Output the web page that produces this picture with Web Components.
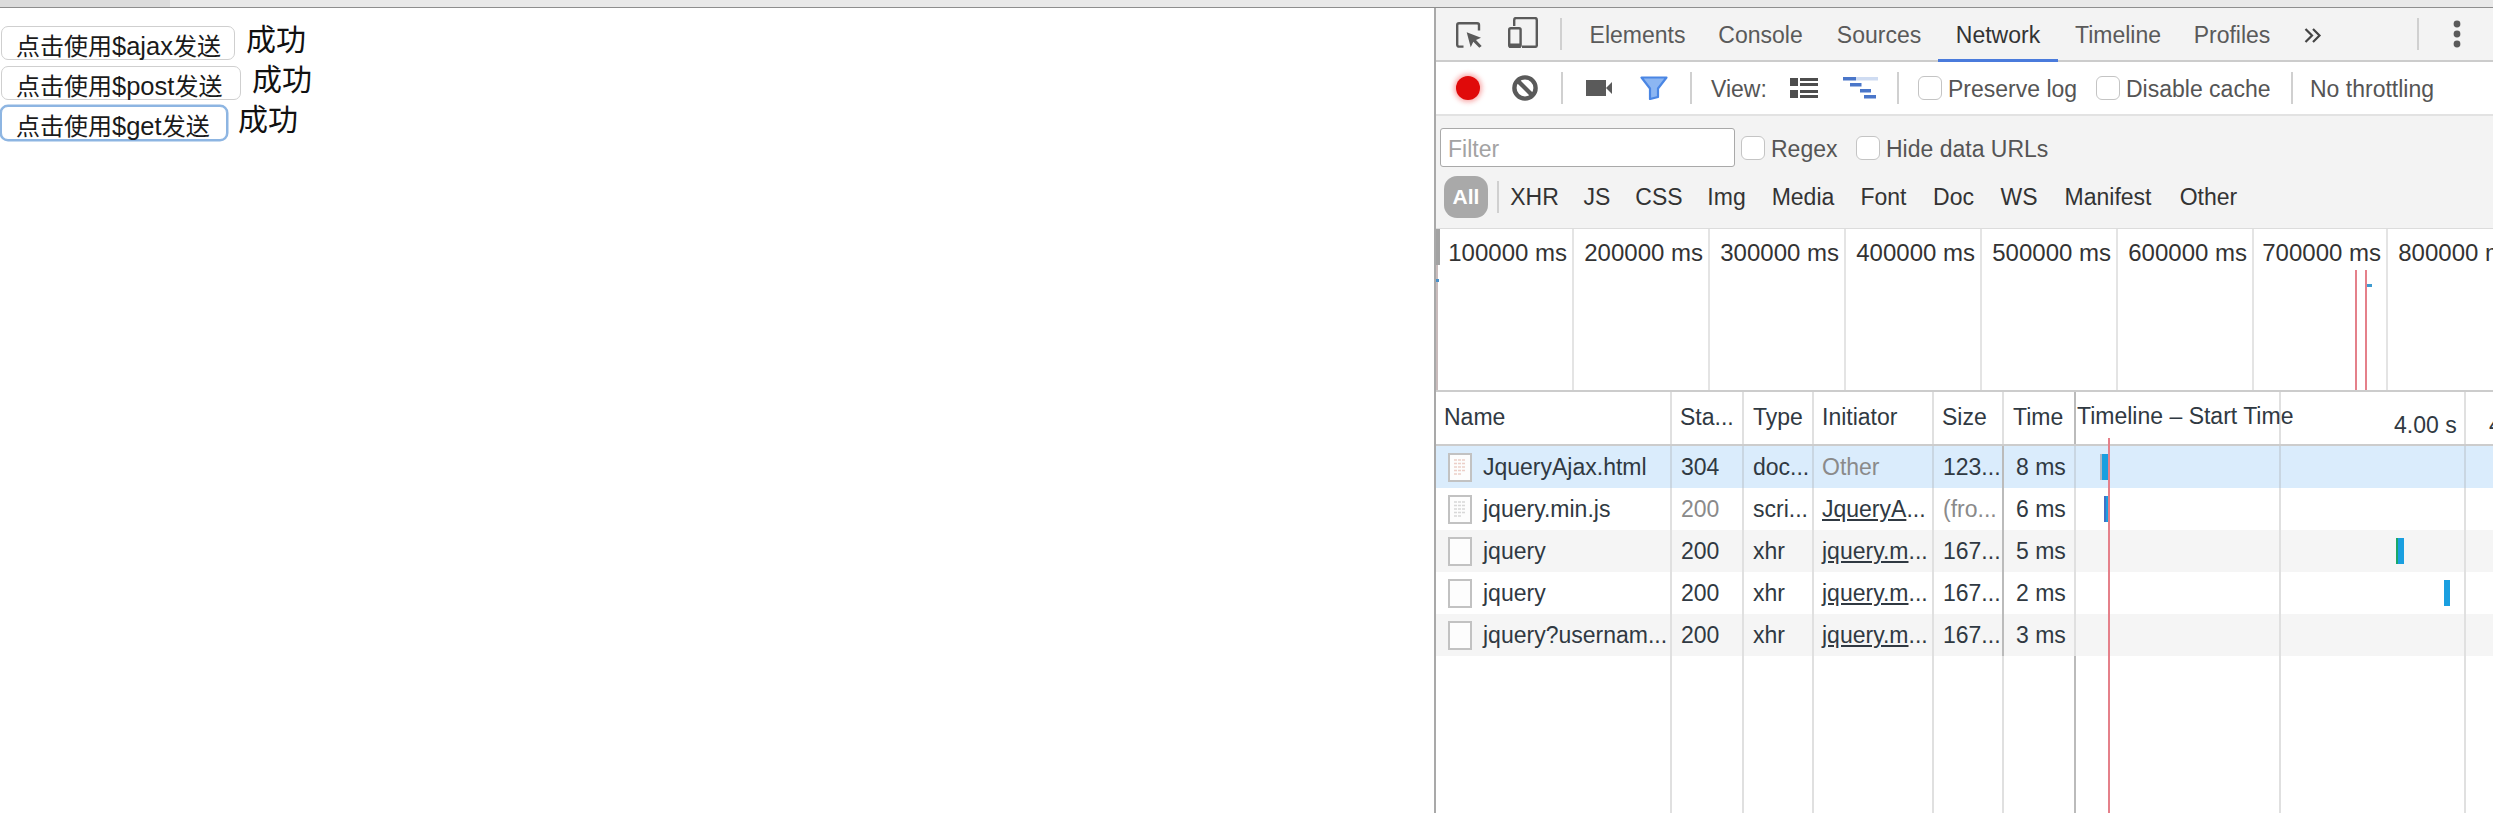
<!DOCTYPE html>
<html lang="zh">
<head>
<meta charset="utf-8">
<title>JqueryAjax</title>
<style>
    html, body { margin: 0; height: 100%; overflow: hidden; background: #fff; }
    body { display: flex; flex-direction: column; font-family: "Liberation Sans", "Noto Sans CJK SC", sans-serif; }
</style>
</head>
<body>
<window-strip></window-strip>
<app-split>
    <demo-pane slot="page">
        <demo-line style="--w:234px">点击使用<span class="l">$ajax</span>发送<span slot="result">成功</span></demo-line>
        <demo-line style="--w:240px">点击使用<span class="l">$post</span>发送<span slot="result">成功</span></demo-line>
        <demo-line focused style="--w:226px">点击使用<span class="l">$get</span>发送<span slot="result">成功</span></demo-line>
    </demo-pane>
    <dev-tools slot="tools">
        <dt-tabbar>
            <dt-tab style="--w:127px">Elements</dt-tab>
            <dt-tab style="--w:119px">Console</dt-tab>
            <dt-tab style="--w:118px">Sources</dt-tab>
            <dt-tab active style="--w:120px">Network</dt-tab>
            <dt-tab style="--w:120px">Timeline</dt-tab>
            <dt-tab style="--w:108px">Profiles</dt-tab>
        </dt-tabbar>
        <dt-toolbar></dt-toolbar>
        <dt-filterbar></dt-filterbar>
        <dt-overview></dt-overview>
        <dt-request-table>
            <dt-request-row selected icon="doc" name="JqueryAjax.html" status="304" type="doc..." initiator="Other" muted-initiator size="123..." time="8 ms" bar-left="24" bar-width="9" bar-lead="#a9b6c4"></dt-request-row>
            <dt-request-row icon="doc" name="jquery.min.js" status="200" muted-status type="scri..." initiator="JqueryA" link size="(fro..." muted-size time="6 ms" bar-left="28" bar-width="6" bar-lead="#3f72c8"></dt-request-row>
            <dt-request-row stripe name="jquery" status="200" type="xhr" initiator="jquery.m" link size="167..." time="5 ms" bar-left="320" bar-width="8" bar-lead="#1aa86a"></dt-request-row>
            <dt-request-row name="jquery" status="200" type="xhr" initiator="jquery.m" link size="167..." time="2 ms" bar-left="368" bar-width="6"></dt-request-row>
            <dt-request-row stripe name="jquery?usernam..." status="200" type="xhr" initiator="jquery.m" link size="167..." time="3 ms"></dt-request-row>
        </dt-request-table>
    </dev-tools>
</app-split>

<script>
// thin window edge over the screenshot
class WindowStrip extends HTMLElement {
    constructor() {
        super();
        this.attachShadow({ mode: 'open' }).innerHTML = `
            <style>
                :host {
                    display: block;
                    height: 7px;
                    flex: none;
                    background: linear-gradient(90deg, #dcdcdc 170px, #e9e9e9 170px);
                    border-bottom: 1px solid #8e8e8e;
                }
            </style>`;
    }
}

class AppSplit extends HTMLElement {
    constructor() {
        super();
        this.attachShadow({ mode: 'open' }).innerHTML = `
            <style>
                :host {
                    display: grid;
                    grid-template-columns: 1434px 1fr;
                    flex: 1;
                    min-height: 0;
                }
            </style>
            <slot name="page"></slot>
            <slot name="tools"></slot>`;
    }
}

class DemoPane extends HTMLElement {
    constructor() {
        super();
        this.attachShadow({ mode: 'open' }).innerHTML = `
            <style>
                :host {
                    display: block;
                    padding: 15px 0 0 1px;
                    background: #fff;
                }
            </style>
            <slot></slot>`;
    }
}

class DemoLine extends HTMLElement {
    constructor() {
        super();
        const ring = this.hasAttribute('focused');
        this.attachShadow({ mode: 'open' }).innerHTML = `
            <style>
                :host {
                    display: flex;
                    align-items: center;
                    gap: 11px;
                    height: 40px;
                    color: #111;
                }
                button {
                    width: var(--w);
                    height: 34px;
                    box-sizing: border-box;
                    margin: 0;
                    padding: 0 0 3px 14px;
                    background: #fff;
                    border: 1.5px solid ${ring ? '#8db5e2' : '#cfcfcf'};
                    border-radius: 7px;
                    font: 24px "Liberation Sans", "Noto Sans CJK SC", sans-serif;
                    color: #1a1a1a;
                    text-align: left;
                    white-space: nowrap;
                    ${ring ? 'box-shadow: 0 0 0 1.5px #8db5e2;' : ''}
                }
                ::slotted(.l) { font-size: 25.5px; }
                .result {
                    padding-bottom: 6px;
                    font-size: 30px;
                    line-height: 34px;
                }
            </style>
            <button><slot></slot></button>
            <span class="result"><slot name="result"></slot></span>`;
    }
}

class DevTools extends HTMLElement {
    constructor() {
        super();
        this.attachShadow({ mode: 'open' }).innerHTML = `
            <style>
                :host {
                    display: flex;
                    flex-direction: column;
                    min-width: 0;
                    min-height: 0;
                    overflow: hidden;
                    border-left: 2px solid #a9a9a9;
                    background: #fff;
                    font-size: 23px;
                    color: #333;
                }
            </style>
            <slot></slot>`;
    }
}

class DtTab extends HTMLElement {
    constructor() {
        super();
        const active = this.hasAttribute('active');
        this.attachShadow({ mode: 'open' }).innerHTML = `
            <style>
                :host {
                    display: flex;
                    align-items: center;
                    justify-content: center;
                    box-sizing: border-box;
                    width: var(--w);
                    height: 54px;
                    margin-bottom: -2px;
                    color: ${active ? '#333' : '#5a5a5a'};
                    white-space: nowrap;
                    ${active ? 'padding-top: 3px; border-bottom: 3px solid #4a7bdc;' : ''}
                }
            </style>
            <slot></slot>`;
    }
}

class DtTabbar extends HTMLElement {
    constructor() {
        super();
        this.attachShadow({ mode: 'open' }).innerHTML = `
            <style>
                :host {
                    display: flex;
                    align-items: flex-start;
                    flex: none;
                    height: 52px;
                    background: #f3f3f3;
                    border-bottom: 2px solid #ccc;
                }
                .icons { display: flex; align-items: center; height: 52px; padding-left: 20px; }
                .sep { width: 2px; height: 32px; background: #d0d0d0; flex: none; }
                svg { display: block; flex: none; }
                .more { margin: 20px 0 0 18px; }
                .end { display: flex; align-items: center; height: 52px; margin-left: auto; padding-right: 32px; }
            </style>
            <div class="icons">
                <svg width="27" height="26" viewBox="0 0 27 26" fill="none" style="margin-top:1px">
                    <path d="M7.5 24.6H3a1.8 1.8 0 0 1-1.8-1.8V3A1.8 1.8 0 0 1 3 1.2h18.2A1.8 1.8 0 0 1 23 3v5.5" stroke="#5a5a5a" stroke-width="2.4"/>
                    <path d="M10.7 10.3L25 15.7 20 18l5.7 6-2.4 1.7-6-6-2.6 5.6z" fill="#5a5a5a"/>
                </svg>
                <svg width="30" height="31" viewBox="0 0 30 31" fill="none" style="margin-left:25px;margin-top:-3px">
                    <path d="M6.2 9V3a2 2 0 0 1 2-2h18.6a2 2 0 0 1 2 2v25.6a1.4 1.4 0 0 1-1.4 1.2H14" stroke="#5a5a5a" stroke-width="2.4"/>
                    <rect x="1.2" y="11.2" width="11.4" height="18.6" rx="1.6" stroke="#5a5a5a" stroke-width="2.4"/>
                    <rect x="1" y="26.5" width="12" height="4" fill="#5a5a5a"/>
                </svg>
                <span class="sep" style="margin:0 12px 0 22px"></span>
            </div>
            <slot></slot>
            <svg class="more" width="18" height="15" viewBox="0 0 18 15" fill="none" stroke="#444" stroke-width="2.2">
                <path d="M1.5 1l6.5 6.5L1.5 14M9 1l6.5 6.5L9 14"/>
            </svg>
            <div class="end">
                <span class="sep" style="margin-right:34px"></span>
                <svg width="8" height="28" viewBox="0 0 8 28" fill="#5a5a5a">
                    <circle cx="4" cy="4" r="3.4"/><circle cx="4" cy="14" r="3.4"/><circle cx="4" cy="24" r="3.4"/>
                </svg>
            </div>`;
    }
}

class DtCheck extends HTMLElement {
    constructor() {
        super();
        this.attachShadow({ mode: 'open' }).innerHTML = `
            <style>
                :host {
                    display: inline-flex;
                    align-items: center;
                    gap: 6px;
                    white-space: nowrap;
                    color: #555;
                }
                i {
                    display: block;
                    flex: none;
                    box-sizing: border-box;
                    width: 24px;
                    height: 24px;
                    background: #fff;
                    border: 1.5px solid #c4c4c4;
                    border-radius: 6px;
                }
                span { padding-top: 3px; }
            </style>
            <i></i><span><slot></slot></span>`;
    }
}

class DtToolbar extends HTMLElement {
    constructor() {
        super();
        this.attachShadow({ mode: 'open' }).innerHTML = `
            <style>
                :host {
                    display: flex;
                    align-items: center;
                    flex: none;
                    height: 52px;
                    padding-left: 20px;
                    background: #fff;
                    border-bottom: 2px solid #e2e2e2;
                    color: #555;
                    white-space: nowrap;
                }
                .rec {
                    width: 24px;
                    height: 24px;
                    border-radius: 50%;
                    background: #e00a0a;
                    box-shadow: 0 0 5px 2px rgba(240, 40, 40, .4);
                    flex: none;
                }
                .sep { width: 2px; height: 32px; background: #d0d0d0; flex: none; }
                svg { display: block; flex: none; }
                dt-check { flex: none; }
                .label { padding-top: 3px; }
            </style>
            <span class="rec"></span>
            <svg style="margin-left:32px" width="26" height="26" viewBox="0 0 26 26" fill="none" stroke="#5a5a5a" stroke-width="4.4">
                <circle cx="13" cy="13" r="10.6"/><path d="M5.5 5.5l15 15"/>
            </svg>
            <span class="sep" style="margin-left:23px"></span>
            <svg style="margin-left:23px" width="26" height="16" viewBox="0 0 26 16" fill="#5a5a5a">
                <rect width="20" height="16"/><path d="M20 8l6-6v12z"/>
            </svg>
            <svg style="margin-left:28px" width="28" height="24" viewBox="0 0 28 24">
                <path d="M1.5 1.5h25L18 12.5v8.5l-8 2V12.5z" fill="#8cb6f2" stroke="#4a86e4" stroke-width="2.2" stroke-linejoin="round"/>
            </svg>
            <span class="sep" style="margin-left:22px"></span>
            <span class="label" style="margin-left:19px;width:60px">View:</span>
            <svg style="margin-left:19px" width="28" height="20" viewBox="0 0 28 20" fill="#4d4d4d">
                <rect width="8" height="8"/><rect y="12" width="8" height="8"/>
                <rect x="10" width="18" height="3"/><rect x="10" y="5" width="18" height="3"/>
                <rect x="10" y="12" width="18" height="3"/><rect x="10" y="17" width="18" height="3"/>
            </svg>
            <svg style="margin-left:25px" width="35" height="22" viewBox="0 0 35 22">
                <rect x="13" width="22" height="3.5" fill="#cfdcf2"/>
                <g fill="#4a76c9">
                    <rect width="13" height="3.5"/><rect x="7" y="6" width="11.5" height="3.5"/>
                    <rect x="17" y="12" width="11" height="3.5"/><rect x="21" y="18" width="12" height="3.5"/>
                </g>
            </svg>
            <span class="sep" style="margin-left:19px"></span>
            <dt-check style="margin-left:19px;width:158px">Preserve log</dt-check>
            <dt-check style="margin-left:20px;width:175px">Disable cache</dt-check>
            <span class="sep" style="margin-left:20px"></span>
            <span class="label" style="margin-left:17px">No throttling</span>`;
    }
}

class DtType extends HTMLElement {
    constructor() {
        super();
        const all = this.hasAttribute('active');
        this.attachShadow({ mode: 'open' }).innerHTML = `
            <style>
                :host {
                    display: flex;
                    align-items: center;
                    justify-content: center;
                    width: var(--w);
                    height: 42px;
                    white-space: nowrap;
                    ${all ? 'background:#a9a9a9;color:#fff;border-radius:13px;font-size:21px;font-weight:bold;' : ''}
                }
            </style>
            <slot></slot>`;
    }
}

class DtFilterbar extends HTMLElement {
    constructor() {
        super();
        this.attachShadow({ mode: 'open' }).innerHTML = `
            <style>
                :host {
                    display: flex;
                    flex-direction: column;
                    flex: none;
                    box-sizing: border-box;
                    height: 113px;
                    padding: 12px 0 0 4px;
                    gap: 9px;
                    background: #f3f3f3;
                    border-bottom: 1px solid #dcdcdc;
                }
                .row { display: flex; align-items: center; }
                .input {
                    box-sizing: border-box;
                    width: 295px;
                    height: 39px;
                    padding: 2px 7px 0;
                    line-height: 36px;
                    background: #fff;
                    border: 1.5px solid #a9a9a9;
                    border-radius: 3px;
                    color: #a3a3a3;
                }
                .types { padding-left: 4px; gap: 27px; }
                .sep { width: 2px; height: 32px; background: #d0d0d0; margin: 0 -14px 0 -18px; }
            </style>
            <div class="row">
                <div class="input">Filter</div>
                <dt-check style="margin-left:6px;width:97px">Regex</dt-check>
                <dt-check style="margin-left:18px">Hide data URLs</dt-check>
            </div>
            <div class="row types">
                <dt-type active style="--w:44px">All</dt-type>
                <span class="sep"></span>
                <dt-type style="--w:45px">XHR</dt-type>
                <dt-type style="--w:26px">JS</dt-type>
                <dt-type style="--w:44px">CSS</dt-type>
                <dt-type style="--w:37px">Img</dt-type>
                <dt-type style="--w:62px">Media</dt-type>
                <dt-type style="--w:45px">Font</dt-type>
                <dt-type style="--w:41px">Doc</dt-type>
                <dt-type style="--w:36px">WS</dt-type>
                <dt-type style="--w:88px">Manifest</dt-type>
                <dt-type style="--w:59px">Other</dt-type>
            </div>`;
    }
}

class DtOverview extends HTMLElement {
    constructor() {
        super();
        const labels = ['100000 ms', '200000 ms', '300000 ms', '400000 ms', '500000 ms', '600000 ms', '700000 ms', '800000 ms'];
        let cells = '';
        labels.forEach((label) => {
            cells += `<div class="cell">${label}</div>`;
        });
        this.attachShadow({ mode: 'open' }).innerHTML = `
            <style>
                :host {
                    display: grid;
                    grid-template-columns: 138px repeat(5, 136px) 134px 136px;
                    position: relative;
                    flex: none;
                    height: 161px;
                    overflow: hidden;
                    background: #fff;
                    border-bottom: 2px solid #ccc;
                }
                .cell {
                    box-sizing: border-box;
                    padding: 9px 5px 0 0;
                    border-right: 2px solid #e4e4e4;
                    text-align: right;
                    white-space: nowrap;
                    font-size: 24px;
                    line-height: 30px;
                    color: #333;
                }
                .mark { position: absolute; }
            </style>
            ${cells}
            <span class="mark" style="left:0;top:0;width:4px;height:36px;background:#a3a3a3"></span>
            <span class="mark" style="left:0;top:36px;bottom:0;width:2px;background:#c9bcbc"></span>
            <span class="mark" style="left:0;top:50px;width:3px;height:3px;background:#4a90c8"></span>
            <span class="mark" style="left:919px;top:41px;bottom:0;width:2px;background:#e5808a"></span>
            <span class="mark" style="left:929px;top:41px;bottom:0;width:2px;background:#e5808a"></span>
            <span class="mark" style="left:931px;top:55px;width:5px;height:3px;background:#3f9bd0"></span>`;
    }
}

const REQUEST_COLUMNS = '236px 72px 70px 120px 70px 72px 1fr';

class DtRequestTable extends HTMLElement {
    constructor() {
        super();
        const heads = [['Name', 8], ['Sta...', 8], ['Type', 9], ['Initiator', 8], ['Size', 8], ['Time', 9]];
        let headHtml = '';
        heads.forEach(([label, pad]) => {
            headHtml += `<div class="h" style="padding-left:${pad}px">${label}</div>`;
        });
        this.attachShadow({ mode: 'open' }).innerHTML = `
            <style>
                :host {
                    display: flex;
                    flex-direction: column;
                    position: relative;
                    flex: 1;
                    min-height: 0;
                    overflow: hidden;
                    color: #303942;
                }
                .head {
                    display: grid;
                    grid-template-columns: ${REQUEST_COLUMNS};
                    flex: none;
                    height: 52px;
                    border-bottom: 2px solid #ccc;
                    white-space: nowrap;
                }
                .h {
                    display: flex;
                    align-items: center;
                    box-sizing: border-box;
                    padding-bottom: 1px;
                    border-right: 2px solid #e0e0e0;
                }
                .h:nth-child(6) { border-right-color: #bbb; }
                .wf { display: grid; grid-template-columns: 205px 185px 1fr; position: relative; }
                .wf div { border-right: 2px solid #e0e0e0; }
                .wf b {
                    position: absolute;
                    font-weight: normal;
                    white-space: nowrap;
                }
                .filler {
                    display: grid;
                    grid-template-columns: ${REQUEST_COLUMNS};
                    flex: 1;
                }
                .filler div { border-right: 2px solid #e0e0e0; }
                .filler div:nth-child(6) { border-right-color: #bbb; }
                .now {
                    position: absolute;
                    left: 672px;
                    top: 46px;
                    bottom: 0;
                    width: 2px;
                    background: #e5808a;
                }
            </style>
            <div class="head">
                ${headHtml}
                <div class="wf">
                    <b style="left:1px;top:11px">Timeline – Start Time</b>
                    <div></div><div></div>
                    <b style="left:318px;top:20px">4.00 s</b>
                    <b style="left:413px;top:20px">4.00 s</b>
                </div>
            </div>
            <slot></slot>
            <div class="filler">
                <div></div><div></div><div></div><div></div><div></div><div></div>
                <div class="wf" style="border:0"><div></div><div></div></div>
            </div>
            <span class="now"></span>`;
    }
}

class DtRequestRow extends HTMLElement {
    constructor() {
        super();
        const attr = (name) => this.getAttribute(name) || '';
        const selected = this.hasAttribute('selected');
        const stripe = this.hasAttribute('stripe');
        const bg = selected ? '#daecfc' : stripe ? '#f5f5f5' : '#fff';
        const line = selected ? '#c9d6e2' : '#e0e0e0';

        const docLines = attr('icon') === 'doc'
            ? `<path d="M6 7h12M6 10.5h12M6 14h12M6 17.5h12M6 21h7" stroke="${selected ? '#eccfc8' : '#d8d8d8'}" stroke-width="1.6" stroke-dasharray="3 1"/>`
            : '';
        const initiator = attr('initiator');
        const initiatorHtml = this.hasAttribute('link') ? `<u>${initiator}</u>...` : initiator;

        let bar = '';
        if (attr('bar-left')) {
            bar = `<i class="bar" style="left:${attr('bar-left')}px;width:${attr('bar-width')}px;border-left:2px solid ${attr('bar-lead') || '#1a9fe0'}"></i>`;
        }

        this.attachShadow({ mode: 'open' }).innerHTML = `
            <style>
                :host {
                    display: grid;
                    grid-template-columns: ${REQUEST_COLUMNS};
                    flex: none;
                    height: 42px;
                    background: ${bg};
                    white-space: nowrap;
                }
                .c {
                    display: flex;
                    align-items: center;
                    box-sizing: border-box;
                    padding-left: 9px;
                    border-right: 2px solid ${line};
                    overflow: hidden;
                }
                .c:nth-child(6) { border-right-color: #bbb; }
                .name { padding-left: 12px; gap: 11px; }
                .muted { color: #8a8a8a; }
                .wf { display: grid; grid-template-columns: 205px 185px 1fr; position: relative; }
                .wf div { border-right: 2px solid ${line}; }
                .bar {
                    position: absolute;
                    top: 8px;
                    height: 26px;
                    box-sizing: border-box;
                    background: #1a9fe0;
                }
                svg { display: block; flex: none; }
            </style>
            <div class="c name">
                <svg width="24" height="29" viewBox="0 0 24 29">
                    <rect x="1" y="1" width="22" height="27" fill="#fdfdfd" stroke="#c2c2c2" stroke-width="2"/>
                    ${docLines}
                </svg>
                <span>${attr('name')}</span>
            </div>
            <div class="c ${this.hasAttribute('muted-status') ? 'muted' : ''}">${attr('status')}</div>
            <div class="c">${attr('type')}</div>
            <div class="c ${this.hasAttribute('muted-initiator') ? 'muted' : ''}" style="padding-left:8px">${initiatorHtml}</div>
            <div class="c ${this.hasAttribute('muted-size') ? 'muted' : ''}">${attr('size')}</div>
            <div class="c" style="padding-left:12px">${attr('time')}</div>
            <div class="wf"><div></div><div></div>${bar}</div>`;
    }
}

customElements.define('window-strip', WindowStrip);
customElements.define('app-split', AppSplit);
customElements.define('demo-pane', DemoPane);
customElements.define('demo-line', DemoLine);
customElements.define('dev-tools', DevTools);
customElements.define('dt-tab', DtTab);
customElements.define('dt-tabbar', DtTabbar);
customElements.define('dt-check', DtCheck);
customElements.define('dt-toolbar', DtToolbar);
customElements.define('dt-type', DtType);
customElements.define('dt-filterbar', DtFilterbar);
customElements.define('dt-overview', DtOverview);
customElements.define('dt-request-table', DtRequestTable);
customElements.define('dt-request-row', DtRequestRow);
</script>
</body>
</html>
